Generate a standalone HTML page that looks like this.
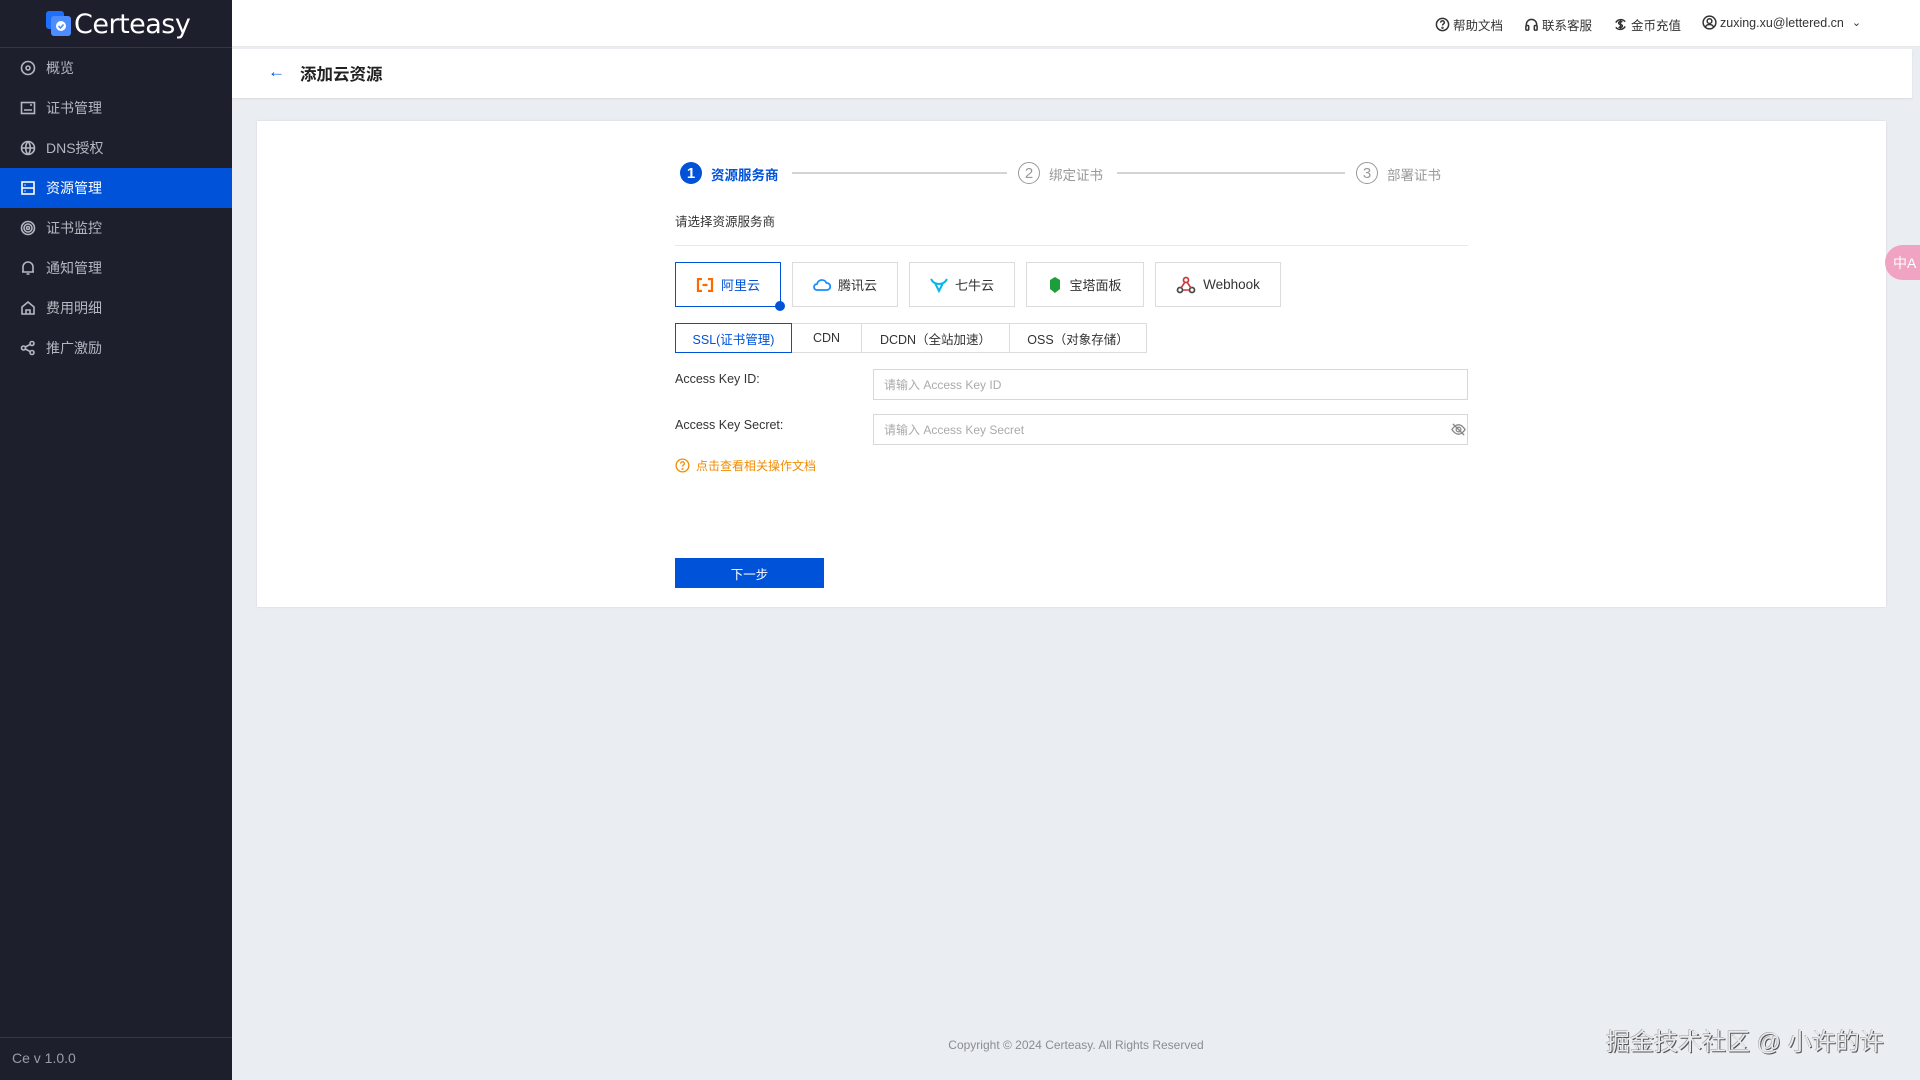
<!DOCTYPE html>
<html><head><meta charset="utf-8"><style>
*{box-sizing:border-box;margin:0;padding:0}
body{width:1920px;height:1080px;overflow:hidden;background:#eaedf1;font-family:"Liberation Sans","Noto Sans CJK SC",sans-serif;position:relative;color:#222}
.abs{position:absolute}
.side{left:0;top:0;width:232px;height:1080px;background:#1d202c}
.logo{left:46px;top:8px;height:32px;display:flex;align-items:center;color:#fff;font-size:27px;font-family:"DejaVu Sans","Liberation Sans",sans-serif;letter-spacing:-0.5px}
.mi{left:0;width:232px;height:40px;display:flex;align-items:center;padding-left:20px;color:#b4b7c0;font-size:14px}
.mi svg{width:16px;height:16px;margin-right:10px;stroke:#b4b7c0;fill:none;stroke-width:1.6}
.mi.act{background:#0052d9;color:#fff}
.mi.act svg{stroke:#fff}
.top{left:232px;top:0;width:1688px;height:47px;background:#fff;border-bottom:1px solid #e5e7eb}
.ti{top:15px;font-size:12.5px;color:#333;display:flex;align-items:center}
.ti svg{width:15px;height:15px;margin-right:3px;fill:none;stroke:#333;stroke-width:1.6}
.ph{left:232px;top:49px;width:1680px;height:49px;background:#fff;box-shadow:0 1px 2px rgba(0,0,0,.08)}
.card{left:257px;top:121px;width:1629px;height:486px;background:#fff;box-shadow:0 0 2px rgba(0,0,0,.12)}
.st{font-size:13.5px;color:#999;top:164px}
.circ{width:22px;height:22px;border-radius:50%;border:1.4px solid #999;color:#999;font-size:15px;display:flex;align-items:center;justify-content:center;top:162px}
.line{height:2px;background:#d4d4d4;top:172px}
.pb{top:262px;height:45px;border:1px solid #dcdcdc;display:flex;align-items:center;justify-content:center;font-size:13px;color:#333}
.pb svg{margin-right:7px}
.tab{top:323px;height:30px;border:1px solid #dcdcdc;display:flex;align-items:center;justify-content:center;font-size:12.5px;color:#333}
.lbl{font-size:12.5px;color:#333}
.inp{left:873px;width:595px;height:31px;border:1px solid #d8d8d8;font-size:12px;color:#aaa;padding-left:10px;display:flex;align-items:center}
</style></head><body>
<div class="abs side"></div>
<div class="abs logo"><svg width="26" height="26" viewBox="0 0 26 26"><rect x="0" y="0" width="18" height="18" rx="3" fill="#1f6fff"/><rect x="5" y="5" width="20" height="20" rx="3" fill="#4d8dff"/><circle cx="15" cy="15" r="5" fill="#fff"/><path d="M12.5 15l2 2 3-3.5" stroke="#4d8dff" stroke-width="1.6" fill="none"/></svg><span style="margin-left:2px">Certeasy</span></div>
<div class="abs" style="left:0;top:47px;width:232px;height:1px;background:#333846"></div>
<div class="abs mi" style="top:48px"><svg viewBox="0 0 16 16"><circle cx="8" cy="8" r="6.5"/><circle cx="8" cy="8" r="2"/></svg>概览</div>
<div class="abs mi" style="top:88px"><svg viewBox="0 0 16 16"><rect x="1.5" y="2.5" width="13" height="11"/><path d="M4 10h8M10 5h2"/></svg>证书管理</div>
<div class="abs mi" style="top:128px"><svg viewBox="0 0 16 16"><circle cx="8" cy="8" r="6.5"/><path d="M1.5 8h13M8 1.5c-3 3-3 10 0 13M8 1.5c3 3 3 10 0 13"/></svg>DNS授权</div>
<div class="abs mi act" style="top:168px"><svg viewBox="0 0 16 16"><rect x="2" y="2" width="12" height="12"/><path d="M2 8h12M4.5 5h1M4.5 11h1"/></svg>资源管理</div>
<div class="abs mi" style="top:208px"><svg viewBox="0 0 16 16"><circle cx="8" cy="8" r="6.5"/><circle cx="8" cy="8" r="4"/><circle cx="8" cy="8" r="1.5"/></svg>证书监控</div>
<div class="abs mi" style="top:248px"><svg viewBox="0 0 16 16"><path d="M3 12V7a5 5 0 0110 0v5zM2 12h12M6.5 14h3"/></svg>通知管理</div>
<div class="abs mi" style="top:288px"><svg viewBox="0 0 16 16"><path d="M2 14V7l6-5 6 5v7zM6 10h4v4H6z"/></svg>费用明细</div>
<div class="abs mi" style="top:328px"><svg viewBox="0 0 16 16"><circle cx="12" cy="3.5" r="2"/><circle cx="3.5" cy="8" r="2"/><circle cx="12" cy="12.5" r="2"/><path d="M5.3 7l4.9-2.6M5.3 9l4.9 2.6"/></svg>推广激励</div>
<div class="abs" style="left:0;top:1037px;width:232px;height:1px;background:#333846"></div>
<div class="abs" style="left:12px;top:1050px;color:#9a9da6;font-size:14px">Ce v 1.0.0</div>

<div class="abs top"></div>
<div class="abs ti" style="left:1435px"><svg viewBox="0 0 16 16"><circle cx="8" cy="8" r="6.5"/><path d="M6 6a2 2 0 114 0c0 1.5-2 1.5-2 3"/><circle cx="8" cy="11.5" r=".5"/></svg>帮助文档</div>
<div class="abs ti" style="left:1524px"><svg viewBox="0 0 16 16"><path d="M2.5 10V8a5.5 5.5 0 0111 0v2"/><rect x="2" y="9" width="3" height="5" rx="1"/><rect x="11" y="9" width="3" height="5" rx="1"/></svg>联系客服</div>
<div class="abs ti" style="left:1613px"><svg viewBox="0 0 16 16"><path d="M13 5A6 6 0 003 6M3 11a6 6 0 0010-1M10 5.5C9 4.5 6 4.5 6 6.5s4 1 4 3-3 2-4 1M8 3.5v9"/></svg>金币充值</div>
<div class="abs ti" style="left:1702px"><svg viewBox="0 0 16 16"><circle cx="8" cy="8" r="6.8"/><circle cx="8" cy="6.5" r="2.5"/><path d="M3.5 13a5 5 0 019 0"/></svg>zuxing.xu@lettered.cn<span style="margin-left:8px;font-size:11px">&#8964;</span></div>

<div class="abs ph"></div>
<div class="abs" style="left:268px;top:62px;color:#0052d9;font-size:17px">←</div>
<div class="abs" style="left:300px;top:61px;font-size:16.5px;font-weight:bold;color:#222">添加云资源</div>

<div class="abs card"></div>
<div class="abs" style="left:680px;top:162px;width:22px;height:22px;border-radius:50%;background:#0052d9;color:#fff;font-size:15px;font-weight:bold;display:flex;align-items:center;justify-content:center">1</div>
<div class="abs st" style="left:711px;color:#0052d9;font-weight:bold">资源服务商</div>
<div class="abs line" style="left:792px;width:215px"></div>
<div class="abs circ" style="left:1018px">2</div>
<div class="abs st" style="left:1049px">绑定证书</div>
<div class="abs line" style="left:1117px;width:228px"></div>
<div class="abs circ" style="left:1356px">3</div>
<div class="abs st" style="left:1387px">部署证书</div>

<div class="abs lbl" style="left:675px;top:211px">请选择资源服务商</div>
<div class="abs" style="left:675px;top:245px;width:793px;height:1px;background:#e8e8e8"></div>

<div class="abs pb" style="left:675px;width:106px;border-color:#0052d9;color:#0052d9"><svg width="18" height="14" viewBox="0 0 18 14"><path d="M6 1H2v12h4M12 1h4v12h-4M6.5 7h5" stroke="#ff6a00" stroke-width="2.2" fill="none"/></svg>阿里云</div>
<div class="abs" style="left:775px;top:301px;width:10px;height:10px;border-radius:50%;background:#0052d9"></div>
<div class="abs pb" style="left:792px;width:106px"><svg width="18" height="16" viewBox="0 0 18 16"><path d="M4 13a3 3 0 010-6 5 5 0 019.5-1A3.5 3.5 0 0114 13z" stroke="#1a8cff" stroke-width="1.8" fill="none"/></svg>腾讯云</div>
<div class="abs pb" style="left:909px;width:106px"><svg width="18" height="16" viewBox="0 0 18 16"><path d="M1 2c2 4 5 5 8 5s6-1 8-5M5 6l4 8 4-8" stroke="#07b6e8" stroke-width="2" fill="none"/></svg>七牛云</div>
<div class="abs pb" style="left:1026px;width:118px"><svg width="14" height="18" viewBox="0 0 14 18"><path d="M7 1l5 3v9l-5 4-5-4V4z" fill="#1e9e3a"/></svg>宝塔面板</div>
<div class="abs pb" style="left:1155px;width:126px;font-size:13.5px"><svg width="20" height="18" viewBox="0 0 20 18"><circle cx="10" cy="4" r="2.5" stroke="#c93c3c" stroke-width="1.8" fill="none"/><circle cx="4" cy="14" r="2.5" stroke="#4a4a4a" stroke-width="1.8" fill="none"/><circle cx="16" cy="14" r="2.5" stroke="#4a4a4a" stroke-width="1.8" fill="none"/><path d="M9 6l-4 6M7 14h6M11 6l4 6" stroke="#c93c3c" stroke-width="1.6"/></svg>Webhook</div>

<div class="abs tab" style="left:675px;width:117px;border-color:#0052d9;color:#0052d9;z-index:2">SSL(证书管理)</div>
<div class="abs tab" style="left:791px;width:71px">CDN</div>
<div class="abs tab" style="left:861px;width:149px">DCDN（全站加速）</div>
<div class="abs tab" style="left:1009px;width:138px">OSS（对象存储）</div>

<div class="abs lbl" style="left:675px;top:372px">Access Key ID:</div>
<div class="abs inp" style="top:369px">请输入 Access Key ID</div>
<div class="abs lbl" style="left:675px;top:418px">Access Key Secret:</div>
<div class="abs inp" style="top:414px">请输入 Access Key Secret</div>
<svg class="abs" style="left:1451px;top:422px" width="15" height="15" viewBox="0 0 16 16" fill="none" stroke="#888" stroke-width="1.4"><path d="M1 8s3-5 7-5 7 5 7 5-3 5-7 5-7-5-7-5z"/><circle cx="8" cy="8" r="2.5"/><path d="M2 2l12 12"/></svg>
<div class="abs" style="left:675px;top:457px;display:flex;align-items:center;color:#f08c00;font-size:12px"><svg width="15" height="15" viewBox="0 0 16 16" fill="none" stroke="#f08c00" stroke-width="1.4" style="margin-right:6px"><circle cx="8" cy="8" r="6.8"/><path d="M6 6a2 2 0 114 0c0 1.5-2 1.5-2 3"/><circle cx="8" cy="11.8" r=".4"/></svg>点击查看相关操作文档</div>
<div class="abs" style="left:675px;top:558px;width:149px;height:30px;background:#0052d9;color:#fff;font-size:12.5px;display:flex;align-items:center;justify-content:center">下一步</div>

<div class="abs" style="left:1885px;top:245px;width:40px;height:35px;border-radius:18px 0 0 18px;background:#f0a3c3;color:#fff;font-size:14px;display:flex;align-items:center;padding-left:8px">中A</div>

<div class="abs" style="left:232px;width:1688px;top:1038px;text-align:center;font-size:12px;color:#8a8d94">Copyright © 2024 Certeasy. All Rights Reserved</div>
<div class="abs" style="left:1606px;top:1022px;font-size:24px;color:#e9ebef;text-shadow:1px 1px 0 #555,-0.5px -0.5px 0 #999">掘金技术社区 @ 小许的许</div>
</body></html>
